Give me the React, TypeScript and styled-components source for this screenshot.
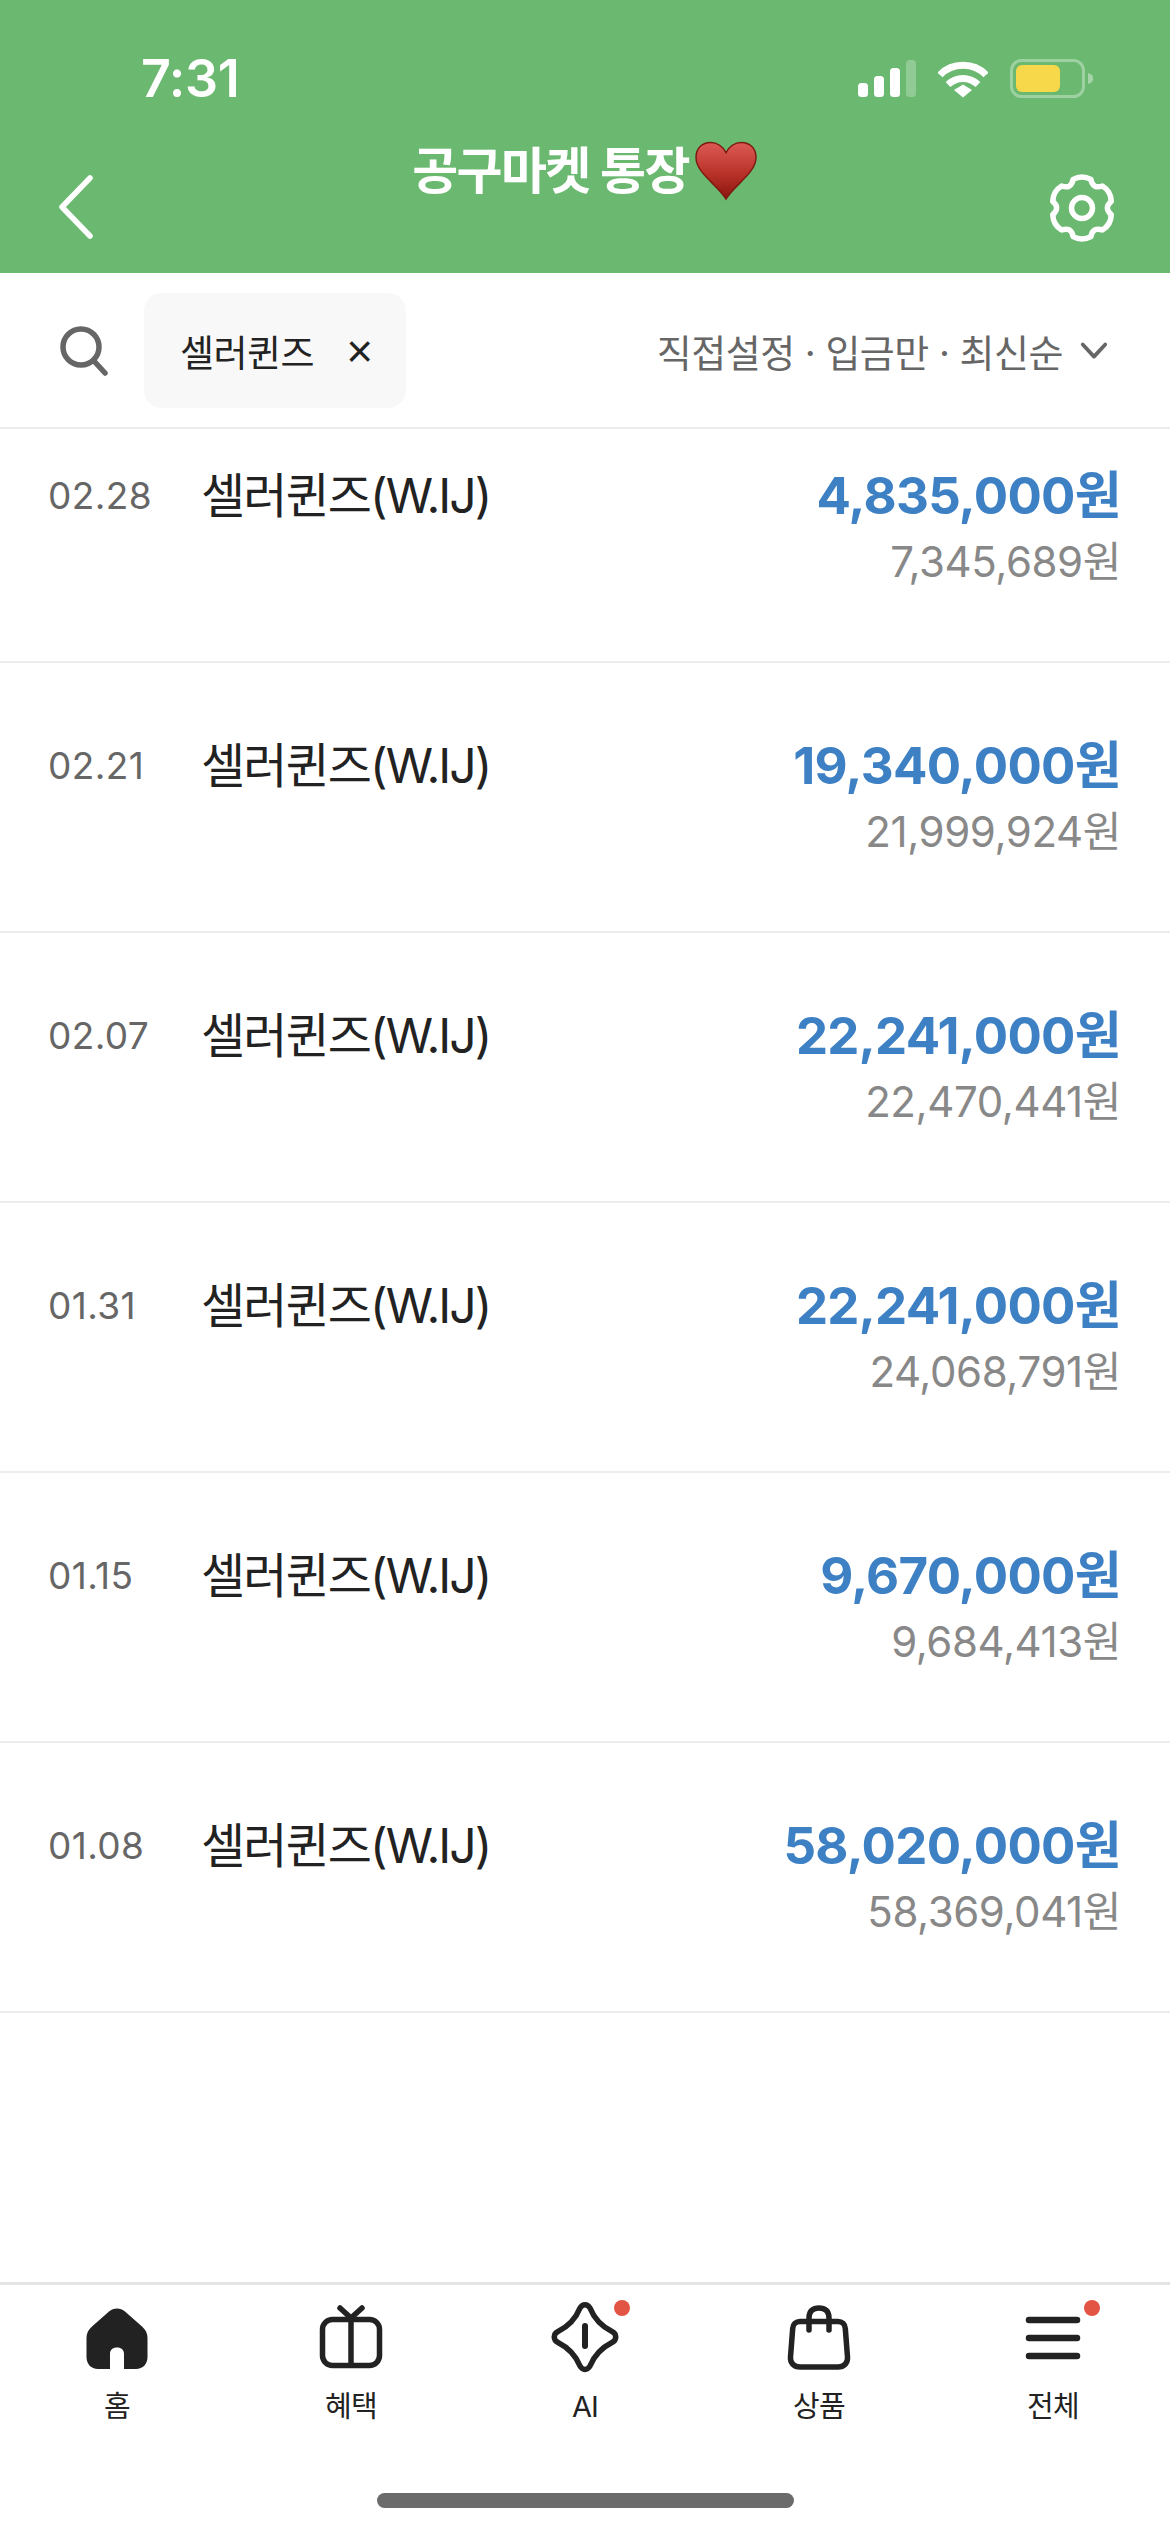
import React from "react";
import styled, { createGlobalStyle } from "styled-components";

const Global = createGlobalStyle`
  html, body { margin: 0; padding: 0; background: #fff; }
  * { box-sizing: border-box; }
  body { font-family: Inter, "Noto Sans CJK KR", sans-serif; }
`;

const Page = styled.div`
  width: 1170px;
  height: 2532px;
  display: flex;
  flex-direction: column;
  background: #fff;
  overflow: hidden;
`;

const Header = styled.header`
  height: 273px;
  flex: none;
  background: #6bb870;
  color: #fff;
  padding-top: 58px;
`;

const StatusBar = styled.div`
  height: 41px;
  display: flex;
  align-items: center;
  justify-content: space-between;
  padding: 0 76px 0 141px;
`;

const Time = styled.span`
  font-size: 52px;
  font-weight: 600;
  line-height: 41px;
  letter-spacing: -0.4px;
`;

const NavBar = styled.div`
  display: grid;
  grid-template-columns: 1fr auto 1fr;
  padding: 43px 48px 0 48px;
`;

const Title = styled.h1`
  margin: -5px 0 0;
  display: flex;
  align-items: center;
  gap: 5px;
  height: 60px;
  font-size: 50px;
  font-weight: 700;
  letter-spacing: -1.6px;
  white-space: nowrap;
`;

const Heart = styled.svg`
  display: block;
  margin-top: 8px;
`;

const BackIcon = styled.svg`
  display: block;
  margin: 33px 0 0 9px;
`;

const GearIcon = styled.svg`
  display: block;
  justify-self: end;
  margin-top: 26px;
`;

const FilterBar = styled.div`
  height: 156px;
  flex: none;
  display: flex;
  align-items: flex-start;
  border-bottom: 2px solid #ececec;
  padding: 20px 61px 0 60px;
`;

const SearchIcon = styled.svg`
  display: block;
  margin-top: 33px;
  flex: none;
`;

const Chip = styled.div`
  width: 262px;
  height: 115px;
  margin-left: 32px;
  display: flex;
  align-items: center;
  padding: 0 36px;
  gap: 32px;
  border-radius: 18px;
  background: #f8f8f8;
  color: #222;
  font-size: 37px;
  letter-spacing: -0.5px;
  white-space: nowrap;
`;

const ChipClose = styled.span`
  font-size: 46px;
  line-height: 46px;
  font-family: "Liberation Sans", sans-serif;
`;

const FilterText = styled.div`
  margin-left: auto;
  height: 115px;
  display: flex;
  align-items: center;
  gap: 16px;
  color: #666;
  font-size: 38px;
  letter-spacing: -0.5px;
  white-space: nowrap;
`;

const List = styled.main`
  flex: 1;
  min-height: 0;
  overflow: hidden;
`;

const Rows = styled.div`
  margin-top: -36px;
`;

const Row = styled.div`
  height: 270px;
  display: flex;
  align-items: flex-start;
  padding: 70px 49px 0 48px;
  border-bottom: 2px solid #ececec;
`;

const DateText = styled.span`
  width: 153px;
  flex: none;
  font-size: 37px;
  line-height: 66px;
  color: #666;
  letter-spacing: 0.4px;
`;

const Name = styled.span`
  font-size: 48px;
  line-height: 66px;
  color: #222;
  letter-spacing: -1.9px;
`;

const Amounts = styled.div`
  margin-left: auto;
  display: flex;
  flex-direction: column;
  align-items: flex-end;
`;

const Amount = styled.span`
  font-size: 51px;
  line-height: 66px;
  font-weight: 700;
  color: #3d80c4;
  letter-spacing: -0.7px;
`;

const Balance = styled.span`
  font-size: 42px;
  line-height: 66px;
  color: #888;
  letter-spacing: -0.4px;
`;

const BottomNav = styled.nav`
  height: 250px;
  flex: none;
  border-top: 3px solid #e4e4e4;
  display: flex;
  flex-direction: column;
  position: relative;
`;

const NavItems = styled.div`
  display: grid;
  grid-template-columns: repeat(5, 1fr);
  padding-top: 12px;
`;

const NavItem = styled.div`
  position: relative;
  display: flex;
  flex-direction: column;
  align-items: center;
  color: #222;
  font-size: 29px;
  font-weight: 400;
  letter-spacing: -0.8px;
  line-height: 40px;
  gap: 10px;
`;

const NavSvg = styled.svg`
  display: block;
`;

const Dot = styled.span<{ $right: number }>`
  position: absolute;
  top: 3px;
  right: ${(p) => p.$right}px;
  width: 16px;
  height: 16px;
  border-radius: 50%;
  background: #e25544;
`;

const HomeBar = styled.div`
  position: absolute;
  left: 377px;
  bottom: 24px;
  width: 417px;
  height: 15px;
  border-radius: 8px;
  background: #6b6b6b;
`;

const StatusIcons = styled.div`
  display: flex;
  align-items: center;
  gap: 22px;
`;

const rows = [
  ["02.28", "4,835,000원", "7,345,689원"],
  ["02.21", "19,340,000원", "21,999,924원"],
  ["02.07", "22,241,000원", "22,470,441원"],
  ["01.31", "22,241,000원", "24,068,791원"],
  ["01.15", "9,670,000원", "9,684,413원"],
  ["01.08", "58,020,000원", "58,369,041원"],
];

const cogPath = () => {
  const c = 40;
  const n = 6;
  const pts: string[] = [];
  for (let i = 0; i < n; i++) {
    const a = (-90 + (i * 360) / n) * (Math.PI / 180);
    const w = 0.3;
    const po = (r: number, t: number) =>
      `${(c + r * Math.cos(t)).toFixed(2)} ${(c + r * Math.sin(t)).toFixed(2)}`;
    const step = Math.PI / n;
    if (i === 0) pts.push(`M${po(30, a - w)}`);
    else pts.push(`Q${po(21.5, a - step)} ${po(30, a - w)}`);
    pts.push(`Q${po(33.5, a)} ${po(30, a + w)}`);
    if (i === n - 1) {
      const a0 = (-90 * Math.PI) / 180;
      pts.push(`Q${po(21.5, a + step)} ${po(30, a0 - w)}`);
    }
  }
  return pts.join(" ") + "Z";
};

const Signal = () => (
  <svg width="58" height="38" viewBox="0 0 58 38" fill="#fff">
    <rect x="0" y="23" width="10" height="14" rx="3.500" />
    <rect x="16" y="16" width="10" height="21" rx="3.500" />
    <rect x="32" y="8" width="10" height="29" rx="3.500" />
    <rect x="48" y="0" width="10" height="37" rx="3.500" opacity="0.25" />
  </svg>
);

const Wifi = () => (
  <svg width="50" height="38" viewBox="0 0 50 38" fill="none" stroke="#fff" strokeWidth="7">
    <path d="M2 15C14 2 36 2 48 15" />
    <path d="M10 24.500C19 16.500 31 16.500 40 24.500" />
    <path d="M16 30L25 24.500L34 30L25 37.500Z" fill="#fff" stroke="none" />
  </svg>
);

const Battery = () => (
  <svg width="84" height="40" viewBox="0 0 84 40">
    <rect x="1.500" y="1.500" width="72" height="36" rx="10" fill="none" stroke="#fff" strokeOpacity="0.35" strokeWidth="3" />
    <rect x="6" y="6" width="44" height="27" rx="6" fill="#f7d84a" />
    <path d="M78 14C82 15 83 17 83 19.500C83 22 82 24 78 25Z" fill="#fff" opacity="0.4" />
  </svg>
);

const Icons = [
  <NavSvg key="h" width="80" height="80" viewBox="0 0 80 80">
    <path
      fill="#222"
      d="M32 14.500C36.500 10.500 43.500 10.500 48 14.500L65 29.500C68.500 32.600 70.500 36 70.500 41V60C70.500 67 66 72 59 72H47V57C47 53 44.500 50.500 40 50.500C35.500 50.500 33 53 33 57V72H21C14 72 9.500 67 9.500 60V41C9.500 36 11.500 32.600 15 29.500Z"
    />
    <rect x="35" y="52" width="10" height="22" rx="5" fill="#fff" />
  </NavSvg>,
  <NavSvg key="g" width="80" height="80" viewBox="0 0 80 80" fill="none" stroke="#222" strokeWidth="5.500" strokeLinecap="round">
    <rect x="11.500" y="22.500" width="57" height="46" rx="10" />
    <path d="M40 22V68" strokeLinecap="butt" />
    <path d="M29 11L40 21L51 11" />
  </NavSvg>,
  <NavSvg key="a" width="80" height="80" viewBox="0 0 80 80" fill="none" stroke="#222" strokeWidth="5.500" strokeLinecap="round">
    <path d="M35 11C37.500 6.500 42.500 6.500 45 11C49 21 56 29 67 34.500C72 37 72 43 67 45.500C56 51 49 59 45 69C42.500 73.500 37.500 73.500 35 69C31 59 24 51 13 45.500C8 43 8 37 13 34.500C24 29 31 21 35 11Z" />
    <path d="M40 29V49" strokeWidth="6" />
  </NavSvg>,
  <NavSvg key="b" width="80" height="80" viewBox="0 0 80 80" fill="none" stroke="#222" strokeWidth="5.500" strokeLinecap="round">
    <path d="M21 24.500H59C63 24.500 66 27 66.300 31.500L68.500 60C69 66 65 70 59 70H21C15 70 11 66 11.500 60L13.700 31.500C14 27 17 24.500 21 24.500Z" />
    <path d="M30 33V21C30 14 34 11 40 11C46 11 50 14 50 21V33" />
  </NavSvg>,
  <NavSvg key="m" width="80" height="80" viewBox="0 0 80 80" fill="none" stroke="#222" strokeWidth="6.500" strokeLinecap="round">
    <path d="M16 23H64M16 41H64M16 59H64" />
  </NavSvg>,
];

const navItems: { label: string; dot?: number }[] = [
  { label: "홈" },
  { label: "혜택" },
  { label: "AI", dot: 72 },
  { label: "상품" },
  { label: "전체", dot: 70 },
];

export default function App() {
  return (
    <Page>
      <Global />
      <Header>
        <StatusBar>
          <Time>7:31</Time>
          <StatusIcons>
            <Signal />
            <Wifi />
            <Battery />
          </StatusIcons>
        </StatusBar>
        <NavBar>
          <BackIcon width="40" height="64" viewBox="0 0 40 64" fill="none" stroke="#fff" strokeWidth="5.500" strokeLinecap="round" strokeLinejoin="round">
            <path d="M33 3L5 32L33 61" />
          </BackIcon>
          <Title>
            공구마켓 통장
            <Heart width="64" height="60" viewBox="0 0 66 62" aria-hidden="true">
              <defs>
                <linearGradient id="heart" x1="0" y1="0" x2="0" y2="1">
                  <stop offset="0" stopColor="#dc5a55" />
                  <stop offset="0.55" stopColor="#b93229" />
                  <stop offset="1" stopColor="#8a150d" />
                </linearGradient>
              </defs>
              <path
                d="M33 60C24 45 2 33 2 17C2 7 9 1.500 17 1.500C24 1.500 30 6 33 12C36 6 42 1.500 49 1.500C57 1.500 64 7 64 17C64 33 42 45 33 60Z"
                fill="url(#heart)"
                stroke="#7d1a12"
                strokeWidth="1.500"
              />
            </Heart>
          </Title>
          <GearIcon width="80" height="80" viewBox="0 0 80 80" fill="none" stroke="#fff" strokeWidth="5.500" strokeLinejoin="round">
            <path d={cogPath()} />
            <circle cx="40" cy="40" r="10.500" />
          </GearIcon>
        </NavBar>
      </Header>
      <FilterBar>
        <SearchIcon width="52" height="52" viewBox="0 0 52 52" fill="none" stroke="#666" strokeWidth="5.500" strokeLinecap="round">
          <circle cx="21" cy="21" r="18" />
          <path d="M34 35L45 47" />
        </SearchIcon>
        <Chip>
          셀러퀸즈
          <ChipClose>×</ChipClose>
        </Chip>
        <FilterText>
          직접설정 · 입금만 · 최신순
          <svg width="30" height="20" viewBox="0 0 32 20" fill="none" stroke="#666" strokeWidth="4" strokeLinecap="round" strokeLinejoin="round">
            <path d="M4 3L16 16L28 3" />
          </svg>
        </FilterText>
      </FilterBar>
      <List>
        <Rows>
          {rows.map(([d, a, b]) => (
            <Row key={d}>
              <DateText>{d}</DateText>
              <Name>셀러퀸즈(W.IJ)</Name>
              <Amounts>
                <Amount>{a}</Amount>
                <Balance>{b}</Balance>
              </Amounts>
            </Row>
          ))}
        </Rows>
      </List>
      <BottomNav>
        <NavItems>
          {navItems.map((it, i) => (
            <NavItem key={it.label}>
              {Icons[i]}
              {it.label}
              {it.dot ? <Dot $right={it.dot} /> : null}
            </NavItem>
          ))}
        </NavItems>
        <HomeBar />
      </BottomNav>
    </Page>
  );
}
